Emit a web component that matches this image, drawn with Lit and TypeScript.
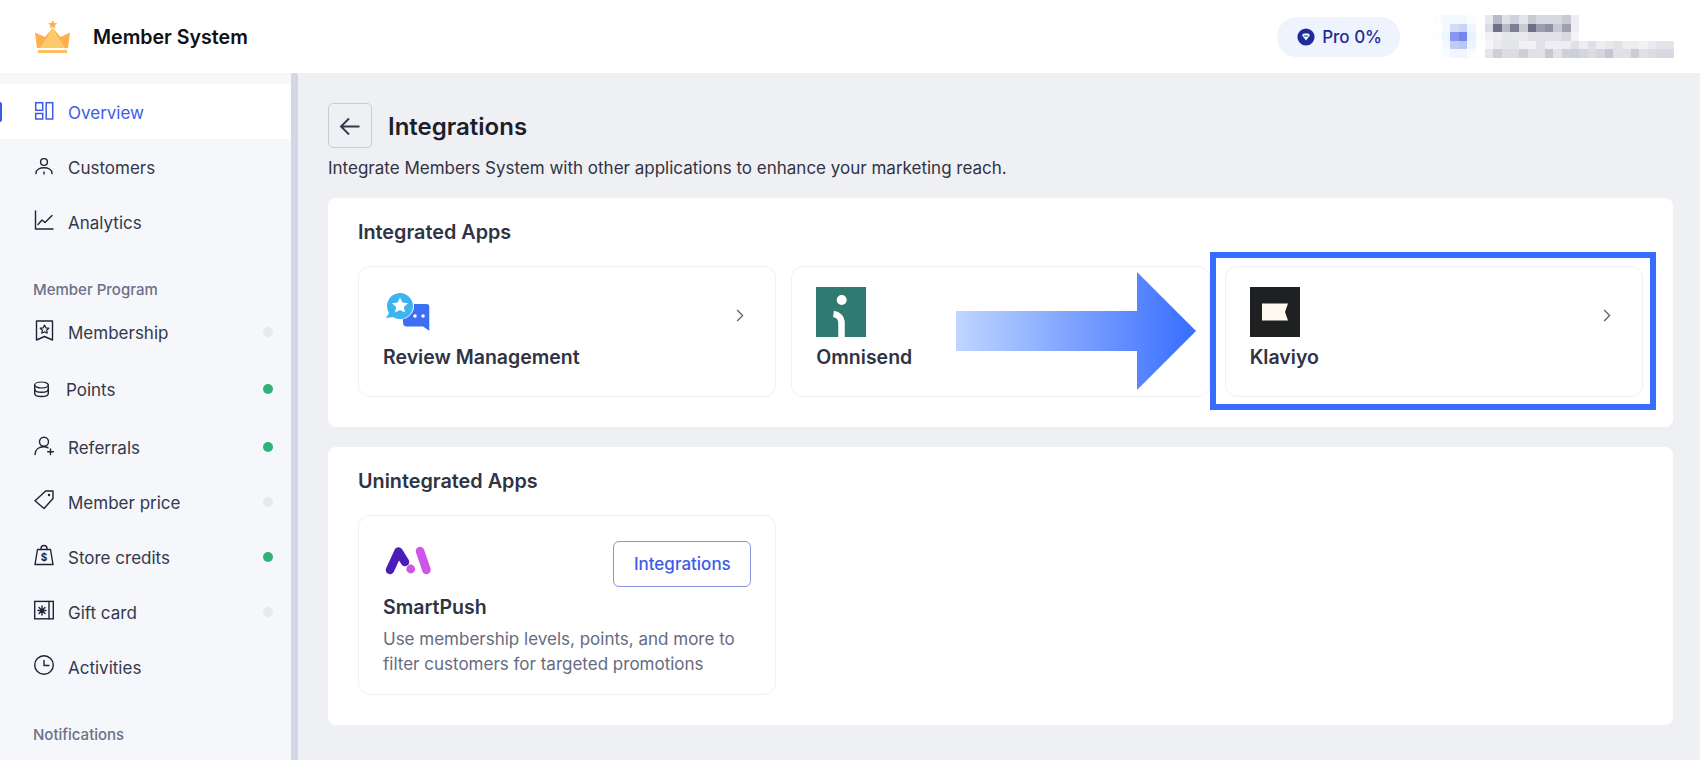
import { LitElement, html, css, svg } from "lit";
import { customElement } from "lit/decorators.js";

// pixelated user block in the header, one string per row (avatar cols, then name cols)
const mosaic = [
  "fbfcff f4f8ff f4f8ff f4f8ff fafcff ffffff e8e9ee b8bac6 e0e1e6 d0d2da e4e5ea c8cad2 d8d9e0 d8d9e0 d8d9e0 c8cad2 eeeef2",
  "ffffff f4f8ff d4dcf8 c8d4f6 f0f6ff ffffff dcdde4 6c7088 b8bac6 7c8094 c8cad2 6c7088 9a9eb0 8c90a2 c8cad2 9ca0b0 eeeef2",
  "fcfdff eef6ff 8898f0 7088ec e8f2ff fcfdff f2f2f5 eeeef2 e6e7eb e6e7eb e8e9ed e0e1e6 e0e1e6 e0e1e6 e0e1e6 d8d9e0 f4f4f7",
  "ffffff f4f8ff c0ccf4 b8c6f2 eef4ff ffffff f6f6f8 eaebef e4e5ea e4e5ea f2f2f5 f2f2f5 e0e1e6 eeeef2 eeeef2 eeeef2 e0e1e6 eeeef2 e0e1e6 eeeef2 e8e9ed e2e3e8 eceded eeeef2 f2f2f5 eaebef e4e5ea e4e5ea",
  "ffffff f8fbff f0f5ff f0f5ff f8fbff ffffff e4e5ea ccced8 dcdde4 dcdde4 ccced8 e0e1e6 e0e1e6 c6c8d2 e2e3e8 ced0da ccced8 d4d5de dcdde4 d4d5de c4c6d0 e0e1e6 e0e1e6 cacbd5 e0e1e6 dcdde4 d8d9e0 d8d9e0",
].map((row) => row.split(" "));

const line = (d: string) => svg`<path d=${d} fill="none" stroke="currentColor" stroke-width="1.4" stroke-linecap="round" stroke-linejoin="round"/>`;

const icons: Record<string, unknown> = {
  overview: svg`<rect x="1.7" y="0.7" width="7" height="7.6" fill="none" stroke="currentColor" stroke-width="1.5"/><rect x="1.7" y="11.5" width="7" height="5.5" fill="none" stroke="currentColor" stroke-width="1.5"/><rect x="12.2" y="0.7" width="6.5" height="16.3" fill="none" stroke="currentColor" stroke-width="1.5"/>`,
  customers: svg`<circle cx="10" cy="5" r="3.4" fill="none" stroke="currentColor" stroke-width="1.4"/>${line("M2 16.5C2 12.5 6 10.8 10 10.8S18 12.5 18 16.5")}${line("M10 15V17")}`,
  analytics: svg`${line("M1.5 -1V17H19")}${line("M4 12.5L8 8L11 10.5L18 3.5")}`,
  membership: svg`${line("M2.5 -1H18.5V18L10.5 14.5L2.5 18Z")}<path d="M10.5 3L11.8 5.8L14.8 6.2L12.6 8.2L13.2 11.2L10.5 9.7L7.8 11.2L8.4 8.2L6.2 6.2L9.2 5.8Z" fill="none" stroke="currentColor" stroke-width="1.2" stroke-linejoin="round"/>`,
  points: svg`<ellipse cx="7.5" cy="6" rx="6.8" ry="3" fill="none" stroke="currentColor" stroke-width="1.2"/>${line("M0.7 6V14.5C0.7 16.2 3.7 17.5 7.5 17.5S14.3 16.2 14.3 14.5V6")}${line("M0.7 10.3C0.7 12 3.7 13.3 7.5 13.3S14.3 12 14.3 10.3")}`,
  referrals: svg`<circle cx="10" cy="4.7" r="4.5" fill="none" stroke="currentColor" stroke-width="1.4"/>${line("M1 17.5C1 12.5 5 9.8 10 9.8C11.5 9.8 13 10.2 14 10.8")}${line("M16.5 12V17.5M13.7 14.7H19.3")}`,
  price: svg`${line("M1 8.7L11.7 -1H19V6.5L10 16.5Z")}<circle cx="15" cy="3" r="1.2" fill="currentColor"/>`,
  store: svg`${line("M3.5 2.5H16.5L19 17.5H1Z")}${line("M7 2.5V1.5A3 3 0 0 1 13 1.5V2.5")}<text x="10" y="14" font-size="10" font-weight="700" text-anchor="middle" fill="currentColor">$</text>`,
  gift: svg`<rect x="0.7" y="-0.6" width="18.6" height="17.4" fill="none" stroke="currentColor" stroke-width="1.4"/>${line("M8 4V13M4 8.5H12M5 5.5L11 11.5M11 5.5L5 11.5")}${line("M15 -0.6V16.8")}`,
  clock: svg`<circle cx="10" cy="8" r="9.3" fill="none" stroke="currentColor" stroke-width="1.4"/>${line("M10 3.5V8.5H15")}`,
};

const section1 = [
  { icon: "overview", label: "Overview", active: true },
  { icon: "customers", label: "Customers" },
  { icon: "analytics", label: "Analytics" },
];
const section2 = [
  { icon: "membership", label: "Membership", dot: "off" },
  { icon: "points", label: "Points", dot: "on", cls: "mt2 narrow" },
  { icon: "referrals", label: "Referrals", dot: "on", cls: "mt3" },
  { icon: "price", label: "Member price", dot: "off" },
  { icon: "store", label: "Store credits", dot: "on" },
  { icon: "gift", label: "Gift card", dot: "off" },
  { icon: "clock", label: "Activities" },
];

const chevron = html`<svg class="chevron" width="8" height="13" viewBox="0 0 8 13"><path d="M1.2 1L6.6 6.5L1.2 12" fill="none" stroke="#555a6c" stroke-width="1.2"/></svg>`;

@customElement("app-root")
export class AppRoot extends LitElement {
  static styles = css`
    :host {
      display: flex;
      flex-direction: column;
      position: relative;
      width: 100%;
      height: 760px;
      overflow: hidden;
      background: #eff0f4;
      color: #2f3344;
      font-family: Inter, "Liberation Sans", sans-serif;
      font-size: 17px;
    }
    .header {
      display: flex;
      align-items: center;
      flex: none;
      height: 73px;
      background: #fff;
      padding-left: 35px;
    }
    .crown {
      margin-top: 3px;
    }
    .brand {
      margin-left: 22px;
      font-size: 19.6px;
      font-weight: 600;
      color: #0f1016;
    }
    .pill {
      display: flex;
      align-items: center;
      gap: 7px;
      margin-left: auto;
      height: 40px;
      padding: 0 18px 0 20px;
      border-radius: 20px;
      background: #eef3fe;
      color: #1e2b9b;
      font-weight: 500;
    }
    .mosaic {
      display: flex;
      flex-direction: column;
      margin: 0 26px 0 33px;
      width: 241px;
      filter: blur(0.7px);
    }
    .mrow {
      display: flex;
      height: 8.6px;
    }
    .mcell {
      width: 8.6px;
      flex: none;
    }
    .body {
      display: flex;
      flex: 1;
      min-height: 0;
    }
    .sidebar {
      flex: none;
      width: 291px;
      padding-top: 11px;
      background: #f6f7fb;
      overflow: hidden;
    }
    .scrollbar {
      flex: none;
      width: 7px;
      border-radius: 3px 3px 0 0;
      background: #d3d6e6;
    }
    .row {
      position: relative;
      display: flex;
      align-items: center;
      height: 55px;
      padding: 0 18px 0 34px;
      color: #33384a;
    }
    .row svg {
      flex: none;
      overflow: visible;
      color: #1f2333;
    }
    .row .ico {
      flex: none;
      width: 34px;
      height: 20px;
    }
    .row .text {
      margin-top: 2px;
    }
    .row.narrow .ico {
      width: 32px;
    }
    .row.mt2 {
      margin-top: 2px;
    }
    .row.mt3 {
      margin-top: 3px;
    }
    .row.active {
      background: #fff;
      color: #3e5be8;
    }
    .row.active svg {
      color: #3e5be8;
    }
    .marker {
      position: absolute;
      left: 0;
      top: 18px;
      width: 2px;
      height: 20px;
      border-radius: 0 2px 2px 0;
      background: #3e5be8;
    }
    .dot {
      width: 10px;
      height: 10px;
      margin-left: auto;
      border-radius: 50%;
    }
    .dot.on {
      background: #30b27c;
    }
    .dot.off {
      background: #e8e9ef;
    }
    .label {
      height: 20px;
      line-height: 20px;
      margin: 30.5px 0 4.5px 33px;
      font-size: 15px;
      font-weight: 500;
      color: #6b7188;
    }
    .main {
      flex: 1;
      min-width: 0;
      padding: 30px 27px 0 30px;
    }
    .title-row {
      display: flex;
      align-items: center;
      gap: 16px;
    }
    .back {
      display: flex;
      align-items: center;
      justify-content: center;
      width: 44px;
      height: 45px;
      box-sizing: border-box;
      border: 1px solid #c8cad4;
      border-radius: 5px;
    }
    h1 {
      margin: 2px 0 0;
      font-size: 24px;
      font-weight: 600;
      color: #1c1f2b;
    }
    .sub {
      margin: 7px 0 19px;
      padding-top: 1px;
      height: 23px;
      line-height: 24px;
      color: #2f3344;
    }
    .panel {
      padding: 22px 30px 30px;
      margin-bottom: 20px;
      border-radius: 8px;
      background: #fff;
    }
    h2 {
      margin: 0 0 22px;
      line-height: 24px;
      font-size: 19.8px;
      font-weight: 600;
      color: #2f3344;
    }
    .grid {
      display: grid;
      grid-template-columns: repeat(3, 1fr);
      gap: 15px;
    }
    .card {
      box-sizing: border-box;
      height: 131px;
      padding: 20px 24px;
      border: 1px solid #f0f1f4;
      border-radius: 12px;
    }
    .card.tall {
      height: 180px;
      padding-top: 25px;
    }
    .card-top {
      display: flex;
      align-items: flex-start;
      justify-content: space-between;
    }
    .chevron {
      margin: 22px 7px 0 0;
    }
    .name {
      margin-top: 8px;
      line-height: 24px;
      font-size: 19.5px;
      font-weight: 600;
      color: #2f3344;
    }
    .btn {
      box-sizing: border-box;
      width: 138px;
      height: 46px;
      line-height: 45px;
      text-align: center;
      border: 1px solid #8a97e0;
      border-radius: 6px;
      color: #3e5be8;
      font-weight: 500;
    }
    .desc {
      margin-top: 7.5px;
      line-height: 25px;
      color: #666b80;
    }
    .arrow {
      position: absolute;
      left: 956px;
      top: 272px;
    }
    .highlight {
      position: absolute;
      left: 1210px;
      top: 252px;
      box-sizing: border-box;
      width: 446px;
      height: 158px;
      border: 6px solid #376dff;
    }
  `;

  private navRow(item: { icon: string; label: string; active?: boolean; dot?: string; cls?: string }) {
    return html`<div class="row ${item.active ? "active" : ""} ${item.cls ?? ""}">
      ${item.active ? html`<span class="marker"></span>` : ""}
      <span class="ico"><svg width="20" height="20" viewBox="0 0 20 20">${icons[item.icon]}</svg></span>
      <span class="text">${item.label}</span>
      ${item.dot ? html`<span class="dot ${item.dot}"></span>` : ""}
    </div>`;
  }

  render() {
    return html`
      <div class="header">
        <svg class="crown" width="36" height="36" viewBox="0 0 36 36">
          <path d="M0 12.5L10 17L17.7 8L25.5 17L35 12.5L33 28H2Z" fill="#fdae4d" />
          <path d="M17.7 8L30 28H5Z" fill="#fcc96b" />
          <rect x="3" y="30" width="29" height="3" fill="#fdbf5f" />
          <path d="M17.7 0L19 3L22.3 3.3L19.8 5.4L20.6 8.6L17.7 6.9L14.8 8.6L15.6 5.4L13.1 3.3L16.4 3Z" fill="#fdae4d" />
        </svg>
        <div class="brand">Member System</div>
        <div class="pill">
          <svg width="18" height="18" viewBox="0 0 18 18">
            <circle cx="9" cy="9" r="8.6" fill="#1e2b9b" />
            <path d="M5 7.2L6.6 5.4H11.4L13 7.2L9 12.4Z" fill="#fff" />
            <path d="M6.8 8H11.2" stroke="#1e2b9b" stroke-width="1" />
          </svg>
          <span>Pro 0%</span>
        </div>
        <div class="mosaic">
          ${mosaic.map(
            (row) => html`<div class="mrow">
              ${row.map((c) => html`<span class="mcell" style="background:#${c}"></span>`)}
            </div>`
          )}
        </div>
      </div>
      <div class="body">
        <nav class="sidebar">
          ${section1.map((i) => this.navRow(i))}
          <div class="label">Member Program</div>
          ${section2.map((i) => this.navRow(i))}
          <div class="label">Notifications</div>
        </nav>
        <div class="scrollbar"></div>
        <main class="main">
          <div class="title-row">
            <div class="back">
              <svg width="22" height="18" viewBox="0 0 22 18">
                <path d="M20.5 9.5H2M10 1.5L2 9.5L10 17.5" fill="none" stroke="#33384a" stroke-width="1.9" />
              </svg>
            </div>
            <h1>Integrations</h1>
          </div>
          <p class="sub">Integrate Members System with other applications to enhance your marketing reach.</p>
          <section class="panel">
            <h2>Integrated Apps</h2>
            <div class="grid">
              <div class="card">
                <div class="card-top">
                  <svg width="50" height="50" viewBox="0 0 50 50">
                    <path d="M22 17H43A3 3 0 0 1 46.3 20V43.7L40 39.5H24A4 4 0 0 1 20 35.5V20Z" fill="#3d6ff5" />
                    <circle cx="32" cy="29" r="1.8" fill="#fff" />
                    <circle cx="40" cy="29" r="1.8" fill="#fff" />
                    <circle cx="17" cy="18.7" r="14" fill="#fff" />
                    <path d="M4 18.7A13 13 0 1 1 10 30L3 31L6 26A13 13 0 0 1 4 18.7Z" fill="#3cb4f0" />
                    <path d="M17 10.5L19.4 15.6L25 16.3L20.9 20.1L22 25.6L17 22.9L12 25.6L13.1 20.1L9 16.3L14.6 15.6Z" fill="#fff" />
                  </svg>
                  ${chevron}
                </div>
                <div class="name">Review Management</div>
              </div>
              <div class="card">
                <div class="card-top">
                  <svg width="50" height="50" viewBox="0 0 50 50">
                    <rect width="50" height="50" fill="#317a71" />
                    <circle cx="25.7" cy="13" r="5" fill="#fff" />
                    <path d="M17.5 27C22 27.5 25.5 30.5 25.5 36V50" fill="none" stroke="#fff" stroke-width="6.5" />
                  </svg>
                </div>
                <div class="name">Omnisend</div>
              </div>
              <div class="card">
                <div class="card-top">
                  <svg width="50" height="50" viewBox="0 0 50 50">
                    <rect width="50" height="50" fill="#1f2022" />
                    <path d="M12 16.5H38L35 25L38 33.5H12Z" fill="#fff9f0" />
                  </svg>
                  ${chevron}
                </div>
                <div class="name">Klaviyo</div>
              </div>
            </div>
          </section>
          <section class="panel">
            <h2>Unintegrated Apps</h2>
            <div class="grid">
              <div class="card tall">
                <div class="card-top">
                  <svg width="50" height="46" viewBox="0 0 50 46">
                    <path d="M7 29L15.5 10.5L22 21" fill="none" stroke="#4a1cb8" stroke-width="8.5" stroke-linecap="round" stroke-linejoin="round" />
                    <path d="M37 10L43.5 29" fill="none" stroke="#cf55e8" stroke-width="8.5" stroke-linecap="round" />
                    <circle cx="27.7" cy="28" r="4.4" fill="#cf55e8" />
                  </svg>
                  <div class="btn">Integrations</div>
                </div>
                <div class="name">SmartPush</div>
                <div class="desc">Use membership levels, points, and more to filter customers for targeted promotions</div>
              </div>
            </div>
          </section>
        </main>
      </div>
      <svg class="arrow" width="240" height="118" viewBox="0 0 240 118">
        <defs>
          <linearGradient id="arrowFill" x1="0" x2="1" y1="0" y2="0">
            <stop offset="0" stop-color="#c0d6ff" />
            <stop offset="1" stop-color="#376dff" />
          </linearGradient>
        </defs>
        <polygon points="0,39 181,39 181,0 240,59 181,118 181,79 0,79" fill="url(#arrowFill)" />
      </svg>
      <div class="highlight"></div>
    `;
  }
}
